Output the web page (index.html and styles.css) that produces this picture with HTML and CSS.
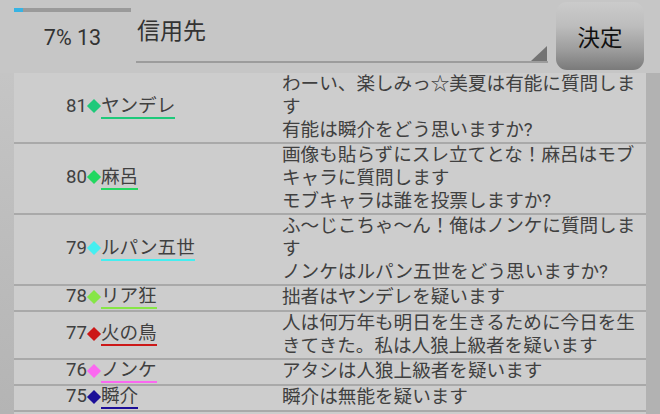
FILE: index.html
```html
<!DOCTYPE html>
<html lang="ja">
<head>
<meta charset="utf-8">
<title>信用先</title>
<link rel="stylesheet" href="styles.css">
</head>
<body>
<div class="screen">
  <header class="top">
    <div class="status">
      <div class="progress"><div class="progress-fill" style="width:8%"></div></div>
      <div class="count">7% 13</div>
    </div>
    <div class="spinner">
      <span class="spinner-text">信用先</span>
      <span class="spinner-arrow"></span>
    </div>
    <button class="decide">決定</button>
  </header>
  <div class="list-area">
    <div class="gutter-left"></div>
    <div class="list">
      <div class="row">
        <div class="who"><span class="num">81</span><span class="dia c-teal"></span><span class="name c-teal">ヤンデレ</span></div>
        <div class="msg">わーい、楽しみっ☆美夏は有能に質問します<br>有能は瞬介をどう思いますか?</div>
      </div>
      <div class="row">
        <div class="who"><span class="num">80</span><span class="dia c-green"></span><span class="name c-green">麻呂</span></div>
        <div class="msg">画像も貼らずにスレ立てとな！麻呂はモブキャラに質問します<br>モブキャラは誰を投票しますか?</div>
      </div>
      <div class="row">
        <div class="who"><span class="num">79</span><span class="dia c-cyan"></span><span class="name c-cyan">ルパン五世</span></div>
        <div class="msg">ふ〜じこちゃ〜ん！俺はノンケに質問します<br>ノンケはルパン五世をどう思いますか?</div>
      </div>
      <div class="row">
        <div class="who"><span class="num">78</span><span class="dia c-lime"></span><span class="name c-lime">リア狂</span></div>
        <div class="msg">拙者はヤンデレを疑います</div>
      </div>
      <div class="row">
        <div class="who"><span class="num">77</span><span class="dia c-red"></span><span class="name c-red">火の鳥</span></div>
        <div class="msg">人は何万年も明日を生きるために今日を生きてきた。私は人狼上級者を疑います</div>
      </div>
      <div class="row">
        <div class="who"><span class="num">76</span><span class="dia c-pink"></span><span class="name c-pink">ノンケ</span></div>
        <div class="msg">アタシは人狼上級者を疑います</div>
      </div>
      <div class="row">
        <div class="who"><span class="num">75</span><span class="dia c-navy"></span><span class="name c-navy">瞬介</span></div>
        <div class="msg">瞬介は無能を疑います</div>
      </div>
    </div>
    <div class="gutter-right"></div>
  </div>
</div>
</body>
</html>
```
FILE: styles.css
```css
* { box-sizing: border-box; }

html, body {
  margin: 0;
  padding: 0;
}

body {
  width: 660px;
  height: 414px;
  overflow: hidden;
  background: #c6c6c6;
  font-family: Roboto, "Noto Sans CJK JP", sans-serif;
  color: #404040;
}

.screen {
  display: flex;
  flex-direction: column;
  height: 414px;
}

/* ---------- top bar ---------- */
.top {
  display: flex;
  align-items: flex-start;
  height: 73px;
  padding-left: 14px;
  flex: none;
}

.status {
  width: 117px;
  display: flex;
  flex-direction: column;
}

.progress {
  margin-top: 8px;
  height: 4px;
  background: #9a9a9a;
}

.progress-fill {
  height: 100%;
  background: #36b3e3;
}

.count {
  margin-top: 13px;
  font-size: 21.5px;
  line-height: 26px;
  text-align: center;
  color: #333;
}

.spinner {
  margin-left: 5px;
  width: 412px;
  height: 63px;
  display: flex;
  align-items: flex-end;
  border-bottom: 2px solid #9c9c9c;
}

.spinner-text {
  flex: 1;
  align-self: flex-start;
  padding-top: 18px;
  padding-left: 1px;
  font-size: 23px;
  line-height: 27px;
  color: #333;
}

.spinner-arrow {
  width: 16px;
  height: 15px;
  margin-right: 1px;
  background: #737373;
  clip-path: polygon(100% 0, 100% 100%, 0 100%);
}

.decide {
  margin-left: 8px;
  margin-top: 2px;
  width: 88px;
  height: 68px;
  border: none;
  border-radius: 11px;
  padding: 0;
  font-family: "Noto Sans CJK JP", sans-serif;
  font-size: 22.5px;
  color: #111;
  background: linear-gradient(#cbcbcb 0%, #bdbdbd 35%, #9d9d9d 70%, #7a7a7a 100%);
}

/* ---------- list ---------- */
.list-area {
  flex: 1;
  display: flex;
  min-height: 0;
}

.gutter-left {
  width: 14px;
  background: linear-gradient(#c5c5c5, #b4b4b4);
}

.list {
  width: 632px;
  background: #cdcdcd;
}

.gutter-right {
  flex: 1;
  background: #b2b2b2;
}

.row {
  display: grid;
  grid-template-columns: 268px 1fr;
  border-bottom: 2px solid #a9a9a9;
  font-size: 18.6px;
  line-height: 23px;
}

.who {
  display: flex;
  align-items: center;
  padding-left: 52px;
  padding-bottom: 1px;
}

.num {
  line-height: 21px;
  padding-bottom: 2px;
}

.dia {
  width: 10px;
  height: 10px;
  margin: 0 2px 2px 2px;
  transform: rotate(45deg);
  background: var(--c);
}

.name {
  line-height: 21px;
  border-bottom: 2px solid var(--c);
}

.msg {
  color: #404040;
}

.c-teal  { --c: #1ec97a; }
.c-green { --c: #22d860; }
.c-cyan  { --c: #45eef0; }
.c-lime  { --c: #86e646; }
.c-red   { --c: #cc1818; }
.c-pink  { --c: #fb68f0; }
.c-navy  { --c: #1c0f98; }
```
